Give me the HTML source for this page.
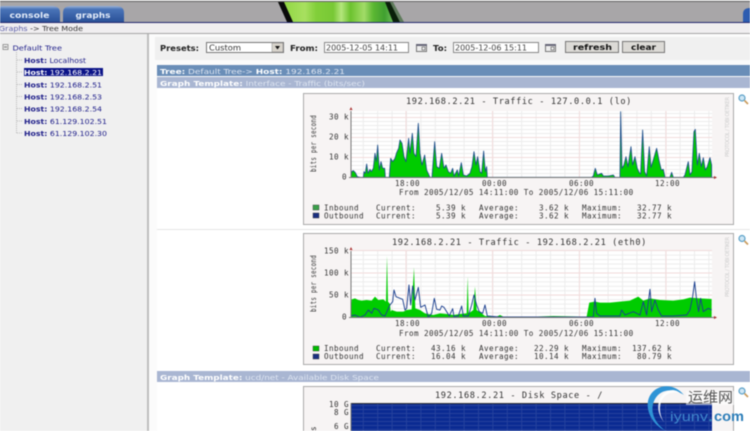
<!DOCTYPE html>
<html><head><meta charset="utf-8"><title>Tree Mode</title>
<style>
html,body{margin:0;padding:0;width:750px;height:431px;overflow:hidden;background:#fff}
svg{display:block;filter:blur(.45px)}
text{font-family:"DejaVu Sans","Liberation Sans",sans-serif;font-size:7px}
.m text,text.m{font-family:"DejaVu Sans Mono","Liberation Mono",monospace;font-size:7.6px;letter-spacing:.42px;fill:#333}
.m text.t{font-size:8.6px;letter-spacing:.62px}
.h{fill:#20208a}
.lab{fill:#dfe6f2}
</style></head><body>
<svg width="750" height="431" viewBox="0 0 750 431" xmlns="http://www.w3.org/2000/svg">
<defs>
<linearGradient id="tab" x1="0" y1="0" x2="0" y2="1"><stop offset="0" stop-color="#9ab2d8"/><stop offset=".2" stop-color="#4a74b8"/><stop offset="1" stop-color="#2a5198"/></linearGradient>
<linearGradient id="logo" x1="0" x2="1" y1="0" y2="0">
<stop offset="0" stop-color="#8fd640"/><stop offset=".2" stop-color="#a8e060"/><stop offset=".3" stop-color="#82cf3a"/><stop offset=".45" stop-color="#78c835"/><stop offset=".52" stop-color="#b4e67c"/><stop offset=".6" stop-color="#6cc22e"/><stop offset=".72" stop-color="#a2dc68"/><stop offset=".8" stop-color="#5cb833"/><stop offset=".9" stop-color="#40a030"/><stop offset="1" stop-color="#7fc76a"/></linearGradient>
<pattern id="g1" width="14.4" height="4" patternUnits="userSpaceOnUse" patternTransform="translate(362.8 1)"><path d="M.5 0V4M0 .5H14.4" stroke="#ececec" stroke-width="1" fill="none"/></pattern>
<pattern id="g2" width="14.4" height="4.45" patternUnits="userSpaceOnUse" patternTransform="translate(362.8 1)"><path d="M.5 0V4.45M0 .5H14.4" stroke="#ececec" stroke-width="1" fill="none"/></pattern>
</defs>

<!-- header -->
<rect width="750" height="23" fill="#a8a6a8"/>
<rect width="750" height="1" fill="#e8e8e8"/><rect y="1" width="750" height="1" fill="#666"/>
<path d="M-6 22V13Q-6 6 4 6H52Q60 6 60 13V22Z" fill="url(#tab)"/>
<path d="M63 22V13Q63 6 71 6H116Q124 6 124 13V22Z" fill="url(#tab)"/>
<text x="9.500" y="18" textLength="40" lengthAdjust="spacingAndGlyphs" style="font-weight:bold;font-size:7.500px" fill="#e2ebf8">console</text>
<text x="75.500" y="18" textLength="35" lengthAdjust="spacingAndGlyphs" style="font-weight:bold;font-size:7.500px" fill="#e2ebf8">graphs</text>
<path d="M282 2H387L396 22H291Z" fill="url(#logo)"/>
<path d="M278 2H284L293 22H287Z" fill="#0a0a0a"/>
<path d="M385 2H390L400 22H393Z" fill="#0a200a"/>
<path d="M390 2H393L404 22H400Z" fill="#3f6a3a" opacity=".7"/>
<path d="M743 22V14Q743 8 750 8V22Z" fill="#2d5cb0"/>
<rect y="22" width="750" height="1" fill="#23286e"/>
<rect y="23" width="750" height="10" fill="#f0eef0"/>
<rect y="33" width="750" height="1" fill="#a6a6a6"/>
<text x="-1" y="31" textLength="84" lengthAdjust="spacingAndGlyphs" fill="#333"><tspan fill="#5a5ea8">Graphs</tspan> -&gt; Tree Mode</text>

<!-- sidebar -->
<rect y="34" width="147" height="397" fill="#f0f0f0"/>
<rect x="147" y="34" width="2" height="397" fill="#bdbdbd"/>
<rect x="149" y="34" width="601" height="397" fill="#fbfbfb"/>
<rect x="3" y="44.500" width="5" height="5" fill="#eee" stroke="#888" stroke-width=".8"/><path d="M4 47H7" stroke="#555" stroke-width=".8"/>
<path d="M16.500 52V133M17 60H23M17 72H23M17 84.500H23M17 96.500H23M17 108.500H23M17 121H23M17 133H23" stroke="#aaa" stroke-width=".8" stroke-dasharray="1 1"/>
<text x="12.500" y="50.500" textLength="49.500" lengthAdjust="spacingAndGlyphs" class="h">Default Tree</text>
<g class="h">
<text x="24" y="63" textLength="62" lengthAdjust="spacingAndGlyphs" class="h"><tspan font-weight="bold">Host:</tspan> Localhost</text>
<rect x="24" y="68" width="79" height="8" fill="#0c1488"/>
<text x="24" y="75" textLength="78" lengthAdjust="spacingAndGlyphs" fill="#fff"><tspan font-weight="bold">Host:</tspan> 192.168.2.21</text>
<text x="24" y="87.500" textLength="78" lengthAdjust="spacingAndGlyphs" class="h"><tspan font-weight="bold">Host:</tspan> 192.168.2.51</text>
<text x="24" y="99.500" textLength="78" lengthAdjust="spacingAndGlyphs" class="h"><tspan font-weight="bold">Host:</tspan> 192.168.2.53</text>
<text x="24" y="111.500" textLength="78" lengthAdjust="spacingAndGlyphs" class="h"><tspan font-weight="bold">Host:</tspan> 192.168.2.54</text>
<text x="24" y="124" textLength="83" lengthAdjust="spacingAndGlyphs" class="h"><tspan font-weight="bold">Host:</tspan> 61.129.102.51</text>
<text x="24" y="136" textLength="83" lengthAdjust="spacingAndGlyphs" class="h"><tspan font-weight="bold">Host:</tspan> 61.129.102.30</text>
</g>

<!-- toolbar -->
<rect x="155" y="37" width="595" height="23" fill="#f0f0f0"/>
<text x="160" y="51" textLength="39" lengthAdjust="spacingAndGlyphs" style="font-weight:bold;font-size:7.500px" fill="#222">Presets:</text>
<rect x="206.500" y="42.500" width="77" height="10" fill="#fff" stroke="#777"/>
<rect x="272" y="43" width="11" height="9" fill="#d8d4cc" stroke="#888" stroke-width=".5"/><path d="M275 46H280L277.500 49.500Z" fill="#111"/>
<text x="209" y="50.500" textLength="32" lengthAdjust="spacingAndGlyphs" style="font-size:7.500px" fill="#333">Custom</text>
<text x="290" y="51" textLength="28" lengthAdjust="spacingAndGlyphs" style="font-weight:bold;font-size:7.500px" fill="#222">From:</text>
<rect x="324.500" y="42.500" width="84" height="10" fill="#fff" stroke="#888"/>
<text x="326" y="50.500" textLength="72" lengthAdjust="spacingAndGlyphs" style="font-size:7.500px" fill="#444">2005-12-05 14:11</text>
<rect x="416.500" y="44.500" width="10" height="7" fill="#eee" stroke="#777"/><rect x="416" y="44" width="11" height="2" fill="#667"/><rect x="422" y="47" width="3" height="3" fill="none" stroke="#666" stroke-width=".7"/>
<text x="433" y="51" textLength="14" lengthAdjust="spacingAndGlyphs" style="font-weight:bold;font-size:7.500px" fill="#222">To:</text>
<rect x="453.500" y="42.500" width="85" height="10" fill="#fff" stroke="#888"/>
<text x="455" y="50.500" textLength="72" lengthAdjust="spacingAndGlyphs" style="font-size:7.500px" fill="#444">2005-12-06 15:11</text>
<rect x="545.500" y="44.500" width="10" height="7" fill="#eee" stroke="#777"/><rect x="545" y="44" width="11" height="2" fill="#667"/><rect x="551" y="47" width="3" height="3" fill="none" stroke="#666" stroke-width=".7"/>
<rect x="565.500" y="41.500" width="53" height="11" fill="#dcdad6" stroke="#777"/>
<text x="573" y="50" textLength="39" lengthAdjust="spacingAndGlyphs" style="font-weight:bold;font-size:7.500px" fill="#111">refresh</text>
<rect x="622.500" y="41.500" width="42" height="11" fill="#dcdad6" stroke="#777"/>
<text x="631" y="50" textLength="25" lengthAdjust="spacingAndGlyphs" style="font-weight:bold;font-size:7.500px" fill="#111">clear</text>

<!-- bars -->
<rect x="157" y="65" width="593" height="11" fill="#6a8eb8"/>
<text x="160" y="74" textLength="185" lengthAdjust="spacingAndGlyphs" class="lab"><tspan font-weight="bold" fill="#fff">Tree:</tspan> Default Tree-&gt; <tspan font-weight="bold" fill="#fff">Host:</tspan> 192.168.2.21</text>
<rect x="157" y="77" width="593" height="11" fill="#a9b6d2"/>
<text x="160" y="86" textLength="205" lengthAdjust="spacingAndGlyphs" class="lab"><tspan font-weight="bold" fill="#fff">Graph Template:</tspan> Interface - Traffic (bits/sec)</text>
<rect x="157" y="88" width="593" height="283" fill="#fff"/>
<rect x="157" y="229" width="593" height="1" fill="#e6e6e6"/>
<rect x="157" y="371" width="593" height="11" fill="#a9b6d2"/>
<text x="160" y="380" textLength="219" lengthAdjust="spacingAndGlyphs" class="lab"><tspan font-weight="bold" fill="#fff">Graph Template:</tspan> ucd/net - Available Disk Space</text>
<rect x="157" y="382" width="593" height="49" fill="#fff"/>

<!-- graph 1 -->
<rect x="303.500" y="93.500" width="430" height="131" fill="#f7f4f4" stroke="#aaa"/>
<rect x="351" y="111" width="361" height="66" fill="#fff"/>
<rect x="351" y="111" width="361" height="66" fill="url(#g1)"/>
<path d="M406 111V177M492.500 111V177M579.500 111V177M666 111V177M351 117.500H712M351 137.500H712M351 157.500H712" stroke="#f2dcdc" fill="none"/>
<g transform="translate(300 90) scale(.3333)">
<path fill="#00cc00" stroke="#1d4f8a" stroke-width="2.500" stroke-linejoin="round" d="M153 262L155 245L160 242L166 248L172 260L180 262L190 262L192 245L196 250L200 222L204 250L210 238L214 245L220 235L225 190L229 215L233 165L238 240L243 215L248 235L254 235L256 262L268 262L272 205L278 215L285 205L290 188L296 175L300 150L306 160L312 200L318 215L326 145L330 190L337 130L342 190L348 200L355 100L360 190L366 225L374 195L380 240L390 262L396 262L398 235L404 155L410 230L418 235L425 190L432 235L438 225L445 245L452 250L458 235L462 258L472 240L476 258L484 218L490 255L500 258L510 250L516 230L522 185L528 225L533 200L540 245L545 250L551 183L556 245L560 230L562 262L875 262L880 258L886 235L892 255L905 250L910 258L925 258L940 255L945 262L960 262L962 65L966 235L972 225L978 200L984 230L993 170L998 225L1005 200L1012 235L1018 248L1022 252L1028 120L1034 245L1040 258L1048 170L1053 232L1060 210L1070 175L1078 215L1084 240L1090 238L1095 262L1110 262L1115 247L1120 262L1150 262L1155 255L1165 215L1170 255L1176 245L1182 125L1186 118L1192 225L1198 190L1204 230L1210 203L1216 240L1222 230L1230 203L1235 225L1235 262Z"/>
</g>
<path d="M351 111V178M349 177.500H716" stroke="#777" fill="none"/>
<path d="M349.500 110L351 107L352.500 110ZM714 176L717 177.500L714 179Z" fill="#a33"/>
<g class="m">
<text x="406" y="104" class="t">192.168.2.21 - Traffic - 127.0.0.1 (lo)</text>
<text x="329" y="119.500">30 k</text><text x="329" y="139.500">20 k</text><text x="329" y="159.500">10 k</text><text x="342" y="179.500">0</text>
<text x="395" y="186">18:00</text><text x="482" y="186">00:00</text><text x="569" y="186">06:00</text><text x="655" y="186">12:00</text>
<text x="399" y="195">From 2005/12/05 14:11:00 To 2005/12/06 15:11:00</text>
<text transform="translate(316 172) rotate(-90)" textLength="57" lengthAdjust="spacingAndGlyphs">bits per second</text>
<rect x="313" y="205" width="6" height="5" fill="#3aa04a" stroke="#333" stroke-width=".4"/><rect x="313" y="213" width="6" height="5" fill="#1a2f80" stroke="#333" stroke-width=".4"/>
<text x="324" y="210.500">Inbound</text><text x="376" y="210.500">Current:</text><text x="466" y="210.500" text-anchor="end">5.39 k</text><text x="479" y="210.500">Average:</text><text x="569" y="210.500" text-anchor="end">3.62 k</text><text x="582" y="210.500">Maximum:</text><text x="672" y="210.500" text-anchor="end">32.77 k</text>
<text x="324" y="218.500">Outbound</text><text x="376" y="218.500">Current:</text><text x="466" y="218.500" text-anchor="end">5.39 k</text><text x="479" y="218.500">Average:</text><text x="569" y="218.500" text-anchor="end">3.62 k</text><text x="582" y="218.500">Maximum:</text><text x="672" y="218.500" text-anchor="end">32.77 k</text>
</g>
<text transform="translate(729 157) rotate(-90)" style="font-size:5px" fill="#ccc" textLength="60">PROTOCOL / TOBI OETIKER</text>

<!-- graph 2 -->
<rect x="303.500" y="233.500" width="430" height="131" fill="#f7f4f4" stroke="#aaa"/>
<rect x="351" y="251" width="361" height="66" fill="#fff"/>
<rect x="351" y="251" width="361" height="66" fill="url(#g2)"/>
<path d="M406 251V317M492.500 251V317M579.500 251V317M666 251V317M351 250.500H712M351 273H712M351 295H712" stroke="#f2dcdc" fill="none"/>
<g transform="translate(300 230) scale(.3333)">
<path fill="#00cc00" d="M153 262L155 208L165 205L175 210L185 212L200 210L215 212L225 200L235 210L250 208L258 215L261 78L264 215L270 222L272 245L275 240L290 245L310 245L320 240L335 238L342 112L346 235L360 240L375 250L400 255L420 250L440 252L460 255L480 252L500 250L503 140L506 250L520 240L525 170L530 240L545 250L555 258L590 260L600 255L610 260L700 260L760 258L860 260L868 218L885 215L900 218L930 218L960 215L990 212L1015 200L1030 212L1050 205L1080 210L1120 212L1150 208L1170 203L1200 205L1235 207L1235 262Z"/>
<path fill="none" stroke="#1b3f8e" stroke-width="2.800" stroke-linejoin="round" d="M153 258L165 255L180 262L195 255L205 240L215 250L222 235L235 240L245 255L255 258L270 225L278 215L282 180L288 200L300 205L308 208L315 240L320 235L327 165L332 225L338 168L345 210L355 172L362 232L375 225L385 262L395 250L403 205L410 238L420 240L425 228L432 232L440 245L448 258L458 236L462 260L475 258L485 228L490 258L505 258L515 225L522 195L530 225L538 245L548 250L555 225L562 258L600 261L880 261L885 205L890 250L900 258L960 258L965 240L975 255L1000 245L1020 255L1030 215L1040 255L1050 178L1055 245L1065 210L1075 240L1085 258L1120 258L1160 255L1170 240L1178 200L1184 155L1190 210L1196 245L1202 205L1210 245L1225 235L1235 240"/>
</g>
<path d="M351 251V318M349 317.500H716" stroke="#777" fill="none"/>
<path d="M349.500 250L351 247L352.500 250ZM714 316L717 317.500L714 319Z" fill="#a33"/>
<g class="m">
<text x="392" y="245" class="t">192.168.2.21 - Traffic - 192.168.2.21 (eth0)</text>
<text x="324" y="253.500">150 k</text><text x="324" y="275.500">100 k</text><text x="329" y="297.500">50 k</text><text x="342" y="319.500">0</text>
<text x="395" y="326">18:00</text><text x="482" y="326">00:00</text><text x="569" y="326">06:00</text><text x="655" y="326">12:00</text>
<text x="399" y="336">From 2005/12/05 14:11:00 To 2005/12/06 15:11:00</text>
<text transform="translate(316 312) rotate(-90)" textLength="57" lengthAdjust="spacingAndGlyphs">bits per second</text>
<rect x="313" y="346" width="6" height="5" fill="#00bb00" stroke="#333" stroke-width=".4"/><rect x="313" y="354" width="6" height="5" fill="#1a2f80" stroke="#333" stroke-width=".4"/>
<text x="324" y="351">Inbound</text><text x="376" y="351">Current:</text><text x="466" y="351" text-anchor="end">43.16 k</text><text x="479" y="351">Average:</text><text x="569" y="351" text-anchor="end">22.29 k</text><text x="582" y="351">Maximum:</text><text x="672" y="351" text-anchor="end">137.62 k</text>
<text x="324" y="359">Outbound</text><text x="376" y="359">Current:</text><text x="466" y="359" text-anchor="end">16.04 k</text><text x="479" y="359">Average:</text><text x="569" y="359" text-anchor="end">10.14 k</text><text x="582" y="359">Maximum:</text><text x="672" y="359" text-anchor="end">80.79 k</text>
</g>
<text transform="translate(729 297) rotate(-90)" style="font-size:5px" fill="#ccc" textLength="60">PROTOCOL / TOBI OETIKER</text>

<!-- graph 3 -->
<rect x="303.500" y="386.500" width="430" height="60" fill="#f7f4f4" stroke="#aaa"/>
<rect x="351" y="404" width="361" height="27" fill="#0a2a92"/>
<rect x="351" y="404" width="361" height="27" fill="url(#g1)" opacity=".12"/>
<rect x="351" y="403" width="361" height="1" fill="#333"/>
<path d="M351 403V431" stroke="#777"/>
<g class="m">
<text x="435" y="398" class="t">192.168.2.21 - Disk Space - /</text>
<text x="329" y="407">10 G</text><text x="334" y="415">8 G</text><text x="334" y="429">6 G</text>
<text transform="translate(316 431) rotate(-90)">s</text>
</g>

<!-- magnifiers -->
<g fill="none"><circle cx="742" cy="98" r="3" fill="#cfe6f4" stroke="#5aa0c8" stroke-width="1.200"/><path d="M744.500 100.500L748 104" stroke="#c89a5a" stroke-width="1.600"/></g>
<g fill="none"><circle cx="742" cy="238.500" r="3" fill="#cfe6f4" stroke="#5aa0c8" stroke-width="1.200"/><path d="M744.500 241L748 244.500" stroke="#c89a5a" stroke-width="1.600"/></g>
<g fill="none"><circle cx="742" cy="391" r="3" fill="#cfe6f4" stroke="#5aa0c8" stroke-width="1.200"/><path d="M744.500 393.500L748 397" stroke="#c89a5a" stroke-width="1.600"/></g>

<!-- watermark -->
<rect x="686" y="391" width="48" height="14" fill="#fff" opacity=".55"/>
<path d="M666 431C650 424 643 405 651 394C657 385 673 382 684 395C672 387 660 390 655 399C649 410 654 423 666 431Z" fill="#2f94d6"/>
<path d="M664 422C654 410 658 395 668 391C672 389 677 390 680 393C672 391 664 394 661 402C659 409 660 416 664 422Z" fill="#fff" opacity=".85"/>
<text x="688" y="402.500" textLength="45" lengthAdjust="spacingAndGlyphs" style="font-family:'Noto Sans CJK SC',sans-serif;font-size:14.500px" fill="#555">运维网</text>
<text x="670" y="421" textLength="38" lengthAdjust="spacingAndGlyphs" style="font-family:'Liberation Sans',sans-serif;font-size:13px" fill="#3f86cc">iyunv</text>
<text x="714" y="421" textLength="30" lengthAdjust="spacingAndGlyphs" style="font-family:'Liberation Sans',sans-serif;font-size:14px;font-weight:bold" fill="#2c7db8">com</text>
<circle cx="710.500" cy="420" r="1.300" fill="#2c7db8"/>
</svg>
</body></html>
